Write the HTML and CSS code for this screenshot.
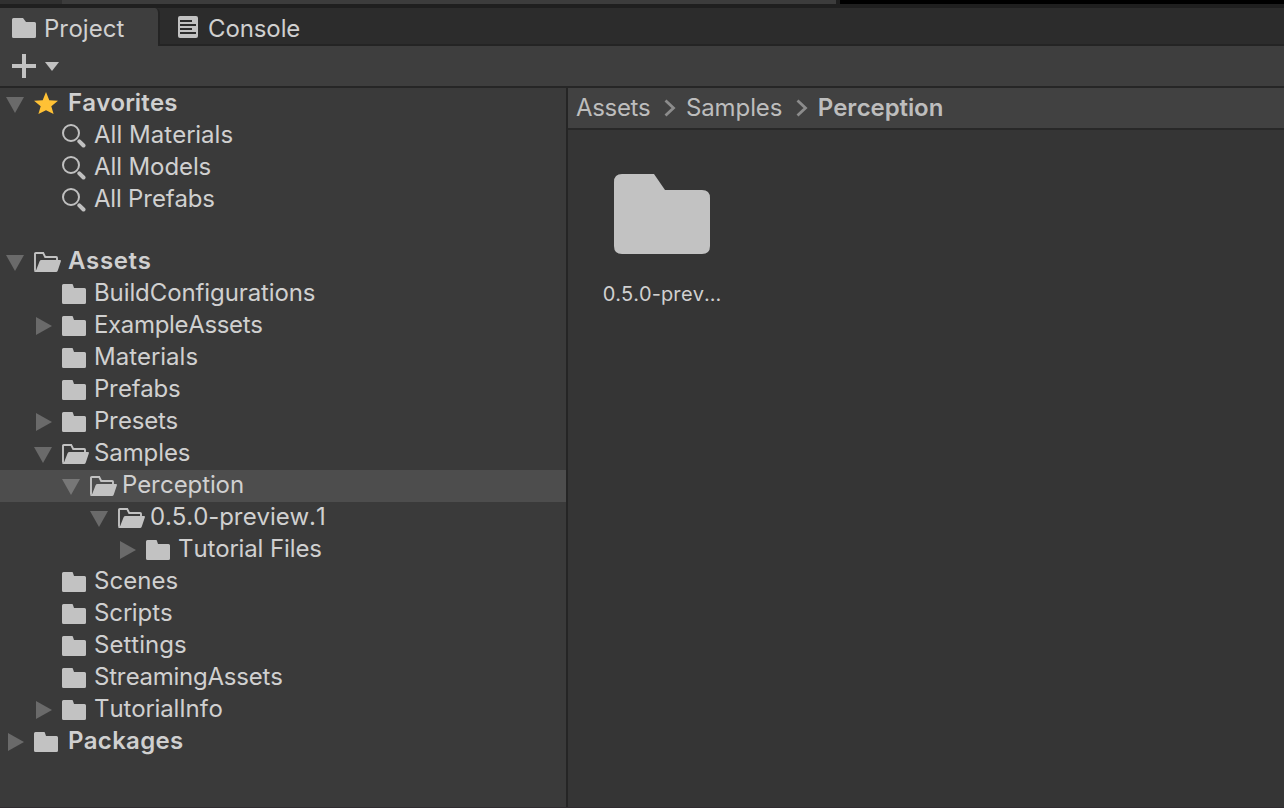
FILE: index.html
```html
<!DOCTYPE html>
<html lang="en">
<head>
<meta charset="utf-8">
<title>Project</title>
<link rel="stylesheet" href="styles.css">
</head>
<body>
<svg class="defs" aria-hidden="true">
  <symbol id="folder" viewBox="0 0 28 20"><path d="M1.500 0H10Q11 0 11 1L12 4H22.500Q24 4 24 5.500V18.500Q24 20 22.500 20H1.500Q0 20 0 18.500V1.500Q0 0 1.500 0Z"/></symbol>
  <symbol id="open" viewBox="0 0 28 20"><path d="M1 18.500V1.800Q1 1 1.800 1H9.200L11.200 5H22.200Q23 5 23 5.800V8" fill="none" stroke="#c2c2c2" stroke-width="1.900"/><path d="M7.500 8H26Q27.300 8 26.900 9.200L23.800 18.500Q23.300 20 22 20H1.500Q0 20 0 18.500L2.200 18L5.600 9.200Q6.100 8 7.500 8Z"/></symbol>
  <symbol id="search" viewBox="0 0 28 24"><circle cx="9" cy="9" r="8" fill="none" stroke="#c0c0c0" stroke-width="2"/><path d="M17.300 17.300L21.500 21.500" stroke="#c0c0c0" stroke-width="4" stroke-linecap="round"/></symbol>
  <symbol id="down" viewBox="0 0 18 16"><path d="M0 0H18L9 16Z"/></symbol>
  <symbol id="right" viewBox="0 0 18 18"><path d="M2 0L18 9L2 18Z"/></symbol>
  <symbol id="chevron" viewBox="0 0 12 18"><path d="M1.500 1.500L9.500 9L1.500 16.500" fill="none" stroke="#8c8c8c" stroke-width="2.800"/></symbol>
</svg>
<div class="window">
  <div class="edge"><span class="edge-a"></span><span class="edge-b"></span><span class="edge-c"></span></div>
  <div class="tabs">
    <div class="tab active"><svg class="tab-folder" viewBox="0 0 24 20"><path d="M1.500 0H11L14 4H22.500Q24 4 24 5.500V18.500Q24 20 22.500 20H1.500Q0 20 0 18.500V1.500Q0 0 1.500 0Z"/></svg><span class="loose">Project</span></div>
    <div class="tab"><svg class="tab-console" viewBox="0 0 20 22"><rect width="20" height="22" rx="2"/><path d="M2 5H14M2 9H18M2 13H14M2 17H18" stroke="#2c2c2c" stroke-width="2"/></svg><span>Console</span></div>
  </div>
  <div class="toolbar">
    <svg class="plus" viewBox="0 0 24 24"><path d="M10 0H14V10H24V14H14V24H10V14H0V10H10Z"/></svg>
    <svg class="caret" viewBox="0 0 14 9"><path d="M0 0H14L7 9Z"/></svg>
  </div>
  <div class="main">
    <div class="tree">
      <div class="row root favorites"><svg class="arrow"><use href="#down"/></svg><svg class="star" viewBox="0 0 24 24"><path d="M12 0L15.300 8.200L24 8.800L17.300 14.300L19.600 22L12 18.200L4.400 22L6.700 14.300L0 8.800L8.700 8.200Z"/></svg><span>Favorites</span></div>
      <div class="row l1"><svg class="arrow"></svg><svg class="find"><use href="#search"/></svg><span class="loose">All Materials</span></div>
      <div class="row l1"><svg class="arrow"></svg><svg class="find"><use href="#search"/></svg><span>All Models</span></div>
      <div class="row l1"><svg class="arrow"></svg><svg class="find"><use href="#search"/></svg><span class="snug">All Prefabs</span></div>
      <div class="row root assets"><svg class="arrow"><use href="#down"/></svg><svg class="icon"><use href="#open"/></svg><span>Assets</span></div>
      <div class="row l1"><svg class="arrow"></svg><svg class="icon"><use href="#folder"/></svg><span>BuildConfigurations</span></div>
      <div class="row l1"><svg class="arrow side"><use href="#right"/></svg><svg class="icon"><use href="#folder"/></svg><span class="tight">ExampleAssets</span></div>
      <div class="row l1"><svg class="arrow"></svg><svg class="icon"><use href="#folder"/></svg><span class="loose">Materials</span></div>
      <div class="row l1"><svg class="arrow"></svg><svg class="icon"><use href="#folder"/></svg><span class="snug">Prefabs</span></div>
      <div class="row l1"><svg class="arrow side"><use href="#right"/></svg><svg class="icon"><use href="#folder"/></svg><span class="snug">Presets</span></div>
      <div class="row l1"><svg class="arrow"><use href="#down"/></svg><svg class="icon"><use href="#open"/></svg><span>Samples</span></div>
      <div class="row l2 selected"><svg class="arrow"><use href="#down"/></svg><svg class="icon"><use href="#open"/></svg><span>Perception</span></div>
      <div class="row l3"><svg class="arrow"><use href="#down"/></svg><svg class="icon"><use href="#open"/></svg><span>0.5.0-preview.1</span></div>
      <div class="row l4"><svg class="arrow side"><use href="#right"/></svg><svg class="icon"><use href="#folder"/></svg><span>Tutorial Files</span></div>
      <div class="row l1"><svg class="arrow"></svg><svg class="icon"><use href="#folder"/></svg><span class="loose">Scenes</span></div>
      <div class="row l1"><svg class="arrow"></svg><svg class="icon"><use href="#folder"/></svg><span>Scripts</span></div>
      <div class="row l1"><svg class="arrow"></svg><svg class="icon"><use href="#folder"/></svg><span class="loose">Settings</span></div>
      <div class="row l1"><svg class="arrow"></svg><svg class="icon"><use href="#folder"/></svg><span class="snug">StreamingAssets</span></div>
      <div class="row l1"><svg class="arrow side"><use href="#right"/></svg><svg class="icon"><use href="#folder"/></svg><span>TutorialInfo</span></div>
      <div class="row root"><svg class="arrow side"><use href="#right"/></svg><svg class="icon"><use href="#folder"/></svg><span>Packages</span></div>
    </div>
    <div class="content">
      <div class="crumbs"><span class="tight">Assets</span><svg class="chev"><use href="#chevron"/></svg><span>Samples</span><svg class="chev"><use href="#chevron"/></svg><span class="current">Perception</span></div>
      <div class="grid">
        <div class="item"><svg class="big" viewBox="0 0 96 80"><path d="M8 0H40L51 16H88Q96 16 96 24V72Q96 80 88 80H8Q0 80 0 72V8Q0 0 8 0Z"/></svg><span>0.5.0-prev...</span></div>
      </div>
    </div>
  </div>
</div>
</body>
</html>
```
FILE: styles.css
```css
* { box-sizing: border-box; }
body { margin: 0; background: #383838; color: #d0d0d0; font: 24px/32px Inter, "Liberation Sans", sans-serif; letter-spacing: -0.1px; font-kerning: none; white-space: nowrap; }
svg { display: block; flex: none; fill: #c2c2c2; }
.defs { position: absolute; width: 0; height: 0; }
.loose { letter-spacing: 0.03px; }
.snug { letter-spacing: -0.22px; }
.tight { letter-spacing: -0.33px; }
.window { width: 1284px; height: 808px; display: flex; flex-direction: column; overflow: hidden; border-bottom: 1px solid #302c30; }
.edge { height: 8px; display: flex; border-bottom: 4px solid #1f1f1f; background: #1f1f1f; }
.edge-a { width: 62px; background: #303030; }
.edge-b { width: 774px; background: #3c3c3c; }
.edge-c { flex: 1; margin-left: 4px; background: #000; }
.tabs { height: 38px; display: flex; background: #2c2c2c; box-shadow: inset 0 -2px #242424; }
.tab { display: flex; align-items: flex-start; padding: 5px 0 0 18px; }
.tab.active { width: 160px; padding-left: 12px; background: #3e3e3e; border-right: 2px solid #242424; border-top-right-radius: 5px; }
.tab-folder { width: 24px; height: 20px; margin: 5px 8px 0 0; }
.tab-console { width: 20px; height: 22px; margin: 3px 10px 0 0; }
.toolbar { height: 42px; display: flex; padding: 8px 12px; background: #3e3e3e; border-bottom: 2px solid #262626; }
.plus { width: 24px; height: 24px; }
.caret { width: 14px; height: 9px; margin: 8px 0 0 9px; }
.main { flex: 1; display: flex; min-height: 0; }
.tree { width: 568px; background: #3a3a3a; border-right: 2px solid #252525; }
.row { height: 32px; display: flex; align-items: flex-start; padding-left: 6px; line-height: 30px; }
.l1 { padding-left: 34px; }
.l2 { padding-left: 62px; }
.l3 { padding-left: 90px; }
.l4 { padding-left: 118px; }
.selected { background: #4d4d4d; }
.selected .arrow { fill: #777; }
.root { font-weight: 600; letter-spacing: 0.3px; }
.favorites { letter-spacing: 0.15px; }
.assets { margin-top: 30px; letter-spacing: 0.65px; }
.arrow { width: 18px; height: 16px; margin: 9px 10px 0 0; fill: #6a6a6a; }
.arrow.side { height: 18px; margin-top: 7px; }
.icon { width: 28px; height: 20px; margin: 6px 4px 0 0; fill: #c2c2c2; }
.find { width: 28px; height: 24px; margin: 4px 4px 0 0; }
.star { width: 24px; height: 24px; margin: 4px 10px 0 0; fill: #ffc135; }
.root .icon { margin-right: 6px; }
.content { flex: 1; background: #353535; }
.crumbs { height: 42px; display: flex; padding: 4px 0 0 8px; background: #414141; border-bottom: 2px solid #282828; color: #bdbdbd; }
.chev { width: 12px; height: 18px; margin: 7px 10px 0 13.500px; }
.current { font-weight: 600; }
.grid { padding: 44px 34px; display: flex; }
.item { width: 120px; display: flex; flex-direction: column; align-items: center; font-size: 20px; letter-spacing: 0.05px; }
.big { width: 96px; height: 80px; margin-bottom: 24px; }
```
